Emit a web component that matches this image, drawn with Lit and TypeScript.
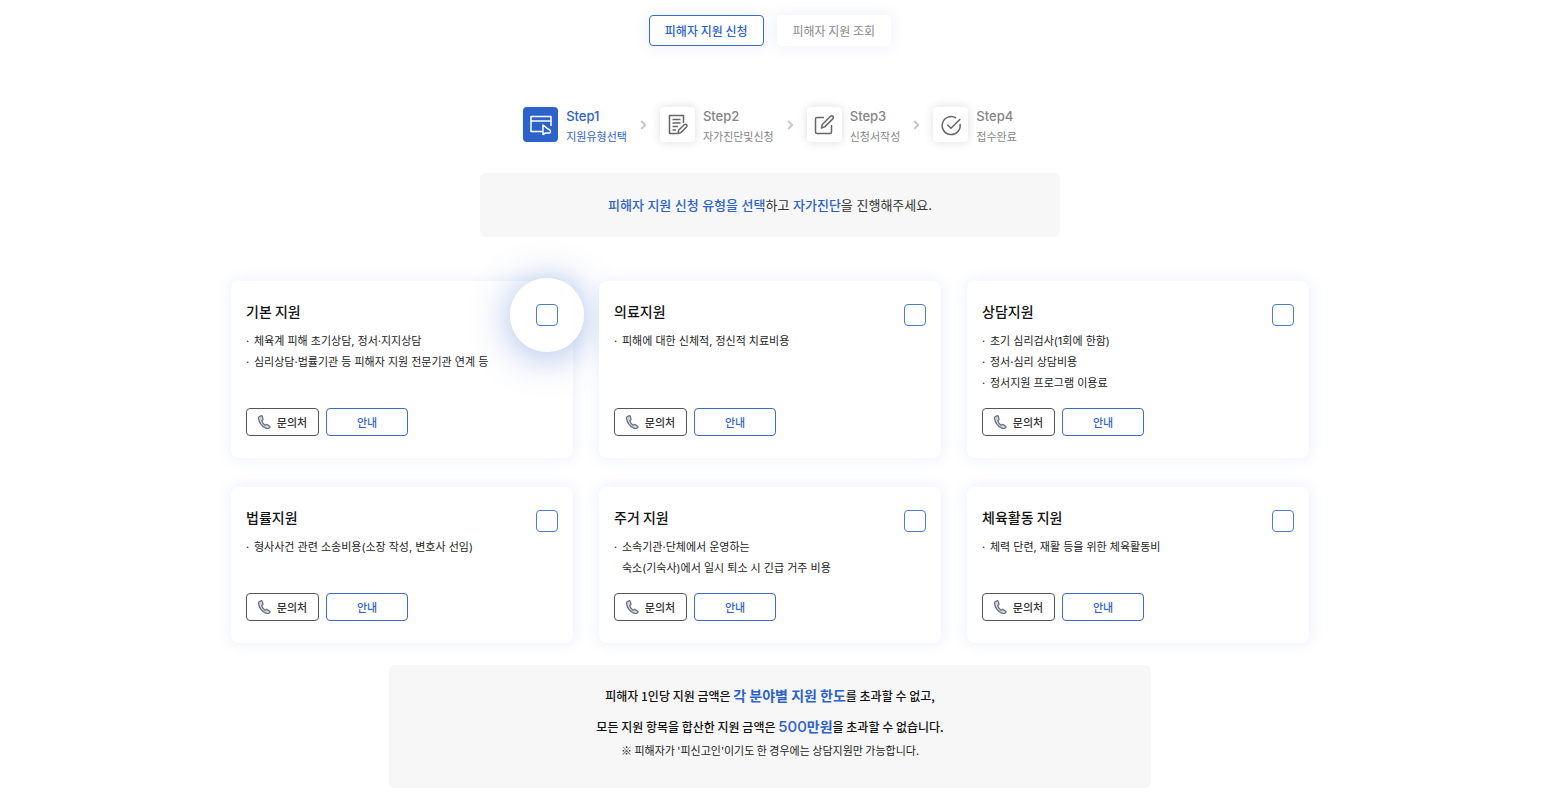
import { LitElement, html, svg, css } from "lit";
import { customElement, property } from "lit/decorators.js";

interface Support {
  id: string;
  title: string;
  items: string[][];
  focus?: boolean;
}

const SUPPORTS: Support[] = [
  {
    id: "basic",
    title: "기본 지원",
    items: [["체육계 피해 초기상담, 정서·지지상담"], ["심리상담·법률기관 등 피해자 지원 전문기관 연계 등"]],
    focus: true,
  },
  { id: "medical", title: "의료지원", items: [["피해에 대한 신체적, 정신적 치료비용"]] },
  {
    id: "counsel",
    title: "상담지원",
    items: [["초기 심리검사(1회에 한함)"], ["정서·심리 상담비용"], ["정서지원 프로그램 이용료"]],
  },
  { id: "legal", title: "법률지원", items: [["형사사건 관련 소송비용(소장 작성, 변호사 선임)"]] },
  {
    id: "housing",
    title: "주거 지원",
    items: [["소속기관·단체에서 운영하는", "숙소(기숙사)에서 일시 퇴소 시 긴급 거주 비용"]],
  },
  { id: "sports", title: "체육활동 지원", items: [["체력 단련, 재활 등을 위한 체육활동비"]] },
];

const STEP_ICONS = [
  svg`<path d="M13 18.500H2V3.500h20v9.500M2 8h20"/><path d="M14 12v9.500l2.500-1.500h4.500c1.300-2.300-.500-3.800-2.500-4.300z"/>`,
  svg`<path d="M12.500 20.500H4.500V2.500h14v7.500M7.500 6.500h8M7.500 10h8M7.500 13.500h5.500M7.500 17h3.500"/><path d="M13 20.500l.600-3.200 5.900-5.800c1.500-1 3.200.600 2.200 2.200l-5.800 5.900z"/>`,
  svg`<path d="M12 4.500H5a1.500 1.500 0 0 0-1.500 1.500v13a1.500 1.500 0 0 0 1.500 1.500h13a1.500 1.500 0 0 0 1.500-1.500v-7"/><path d="M9.500 15l.800-3.500 8.300-8.300c1.600-1.200 3.600.800 2.400 2.400l-8.300 8.300z"/>`,
  svg`<path d="M21 10.800A9 9 0 1 1 17 5"/><path d="M8.300 11.700l3.700 3.600 9.300-9.300"/>`,
];

const STEPS = [
  ["Step1", "지원유형선택"],
  ["Step2", "자가진단및신청"],
  ["Step3", "신청서작성"],
  ["Step4", "접수완료"],
];

@customElement("support-card")
export class SupportCard extends LitElement {
  @property({ attribute: false }) data!: Support;

  static styles = css`
    :host {
      display: flex;
      flex-direction: column;
      box-sizing: border-box;
      position: relative;
      padding: 20px 15px 22px;
      border-radius: 8px;
      background: #fff;
      box-shadow: 0 0 16px rgba(45, 98, 200, 0.1);
    }
    .head {
      display: flex;
      justify-content: space-between;
      height: 20px;
      margin-bottom: 10px;
    }
    .title {
      margin: 0;
      font-size: 14px;
      line-height: 20px;
      font-weight: 500;
      color: #111;
    }
    .check {
      position: relative;
      width: 22px;
      height: 22px;
      margin-top: 3px;
    }
    .focus::before {
      content: "";
      position: absolute;
      inset: -26px;
      border-radius: 50%;
      background: rgba(255, 255, 255, 0.8);
      box-shadow: 0 4px 40px rgba(45, 98, 200, 0.44);
    }
    .box {
      appearance: none;
      position: relative;
      display: block;
      box-sizing: border-box;
      width: 22px;
      height: 22px;
      margin: 0;
      border: 1px solid #4a7ad2;
      border-radius: 4px;
      background: #fff;
      cursor: pointer;
    }
    .box:checked {
      background: #2d62c8;
    }
    .list {
      flex: 1;
      min-height: 42px;
      margin: 0 0 14px;
      padding: 0;
      list-style: none;
      font-family: var(--latin);
      font-size: 11px;
      line-height: 21px;
      color: #222;
    }
    .item {
      display: flex;
    }
    .item::before {
      content: "·";
      width: 8px;
    }
    .line {
      display: block;
    }
    .actions {
      display: flex;
      gap: 7px;
    }
    .btn {
      display: flex;
      align-items: center;
      justify-content: center;
      box-sizing: border-box;
      height: 28px;
      padding: 0;
      border: 1px solid #3a6acb;
      border-radius: 4px;
      background: #fff;
      font: 500 11px/16px var(--font);
      color: #2d62c8;
      cursor: pointer;
    }
    .guide {
      width: 82px;
    }
    .contact {
      width: 73px;
      gap: 6px;
      border-color: #555;
      color: #333;
    }
    .phone {
      width: 13px;
      height: 14px;
      fill: #d4d8df;
      stroke: #626b7d;
      stroke-width: 1.2;
      stroke-linejoin: round;
    }
  `;

  render() {
    const d = this.data;
    return html`
      <div class="head">
        <h2 class="title"><label for=${d.id}>${d.title}</label></h2>
        <span class="check ${d.focus ? "focus" : ""}"><input class="box" type="checkbox" id=${d.id} /></span>
      </div>
      <ul class="list">
        ${d.items.map(
          (lines) => html`<li class="item"><span>${lines.map((l) => html`<span class="line">${l}</span>`)}</span></li>`
        )}
      </ul>
      <div class="actions">
        <button class="btn contact" type="button">
          <svg class="phone" viewBox="0 0 13 14" aria-hidden="true">
            <path d="M1 1.800L3.200.700c.400-.100.700 0 .900.400L5 4c.100.400 0 .700-.300.900L3.700 5.600C4.300 7.600 5.500 9.200 7.200 10.200L8.400 9.600c.300-.200.700-.100 1 .100L11.800 11.500c.300.200.300.600.100.900C10.800 13.600 9 13.800 7.500 13 3.500 10.800 1 7.500.600 3.600.500 2.800.600 2.200 1 1.800z" />
          </svg>
          문의처
        </button>
        <button class="btn guide" type="button">안내</button>
      </div>
    `;
  }
}

@customElement("app-root")
export class AppRoot extends LitElement {
  static styles = css`
    :host {
      --font: "Noto Sans CJK KR", sans-serif;
      --latin: Inter, "Noto Sans CJK KR", sans-serif;
      display: flex;
      flex-direction: column;
      align-items: center;
      box-sizing: border-box;
      padding: 15px 20px 12px 0;
      background: #fff;
      font-family: var(--font);
      color: #222;
    }
    .tabs {
      display: flex;
      gap: 13px;
      margin-bottom: 61px;
    }
    .tab {
      box-sizing: border-box;
      height: 31px;
      padding: 0 15px;
      border: 1px solid transparent;
      border-radius: 4px;
      background: #fff;
      box-shadow: 0 0 16px rgba(45, 98, 200, 0.1);
      font: 400 12px/28px var(--font);
      color: #888;
      cursor: pointer;
    }
    .tab.on {
      border-color: #3a6acb;
      font-weight: 500;
      color: #2d62c8;
    }
    .steps {
      display: flex;
      align-items: flex-start;
      gap: 13px;
      margin: 0 0 27px;
      padding: 0;
      list-style: none;
      color: #858585;
    }
    .step {
      display: flex;
      align-items: flex-start;
      gap: 8px;
    }
    .tile {
      display: grid;
      place-items: center;
      width: 35px;
      height: 35px;
      border-radius: 4px;
      background: #fff;
      box-shadow: 0 0 10px rgba(0, 0, 0, 0.14);
      color: #666;
    }
    .icon {
      width: 24px;
      height: 24px;
      fill: none;
      stroke: currentColor;
      stroke-width: 1.5;
      stroke-linejoin: round;
    }
    .step.on {
      color: #2d62c8;
    }
    .step.on .tile {
      background: #2d62c8;
      box-shadow: none;
      color: #fff;
    }
    .name {
      display: block;
      font-family: var(--latin);
      font-size: 13px;
      line-height: 19px;
      font-weight: 500;
    }
    .desc {
      display: block;
      font-size: 11px;
      line-height: 20px;
    }
    .arrow {
      display: flex;
      align-items: center;
      height: 35px;
    }
    .chevron {
      width: 7px;
      height: 10px;
      fill: none;
      stroke: #c8c8c8;
      stroke-width: 2;
    }
    .banner {
      box-sizing: border-box;
      width: 100%;
      max-width: 580px;
      margin: 0 0 44px;
      padding: 22px 20px;
      border-radius: 6px;
      background: #f7f7f7;
      text-align: center;
      font-family: var(--latin);
      font-size: 13px;
      line-height: 20px;
      color: #333;
    }
    .em {
      font-weight: 500;
      color: #2d62c8;
    }
    .cards {
      display: grid;
      grid-template-columns: repeat(3, 1fr);
      gap: 29px 26px;
      width: 100%;
      max-width: 1078px;
    }
    .limit {
      box-sizing: border-box;
      width: 100%;
      max-width: 762px;
      margin-top: 22px;
      padding: 15px 20px 30px;
      border-radius: 6px;
      background: #f7f7f7;
      text-align: center;
    }
    .rule {
      margin: 0;
      font-size: 12px;
      line-height: 31px;
      font-weight: 500;
      color: #111;
    }
    .strong {
      font-size: 14px;
      line-height: 16px;
      font-weight: 700;
      color: #2d62c8;
    }
    .amount {
      font-family: var(--latin);
      font-size: 15px;
      font-weight: 500;
    }
    .note {
      margin: 0;
      font-size: 11px;
      line-height: 16px;
      color: #222;
    }
  `;

  render() {
    return html`
      <nav class="tabs">
        <button class="tab on" type="button">피해자 지원 신청</button>
        <button class="tab" type="button">피해자 지원 조회</button>
      </nav>
      <ol class="steps">
        ${STEPS.map(
          ([name, desc], i) => html`
            ${i
              ? html`<li class="arrow" aria-hidden="true">
                  <svg class="chevron" viewBox="0 0 7 10"><path d="M1.200 1l4 4-4 4" /></svg>
                </li>`
              : ""}
            <li class="step ${i ? "" : "on"}">
              <span class="tile"><svg class="icon" viewBox="0 0 24 24" aria-hidden="true">${STEP_ICONS[i]}</svg></span>
              <span><span class="name">${name}</span><span class="desc">${desc}</span></span>
            </li>
          `
        )}
      </ol>
      <p class="banner">
        <span class="em">피해자 지원 신청 유형을 선택</span>하고 <span class="em">자가진단</span>을 진행해주세요.
      </p>
      <main class="cards">${SUPPORTS.map((s) => html`<support-card .data=${s}></support-card>`)}</main>
      <section class="limit">
        <p class="rule">피해자 1인당 지원 금액은 <span class="strong">각 분야별 지원 한도</span>를 초과할 수 없고,</p>
        <p class="rule">모든 지원 항목을 합산한 지원 금액은 <span class="strong"><span class="amount">500</span>만원</span>을 초과할 수 없습니다.</p>
        <p class="note">※ 피해자가 '피신고인'이기도 한 경우에는 상담지원만 가능합니다.</p>
      </section>
    `;
  }
}
